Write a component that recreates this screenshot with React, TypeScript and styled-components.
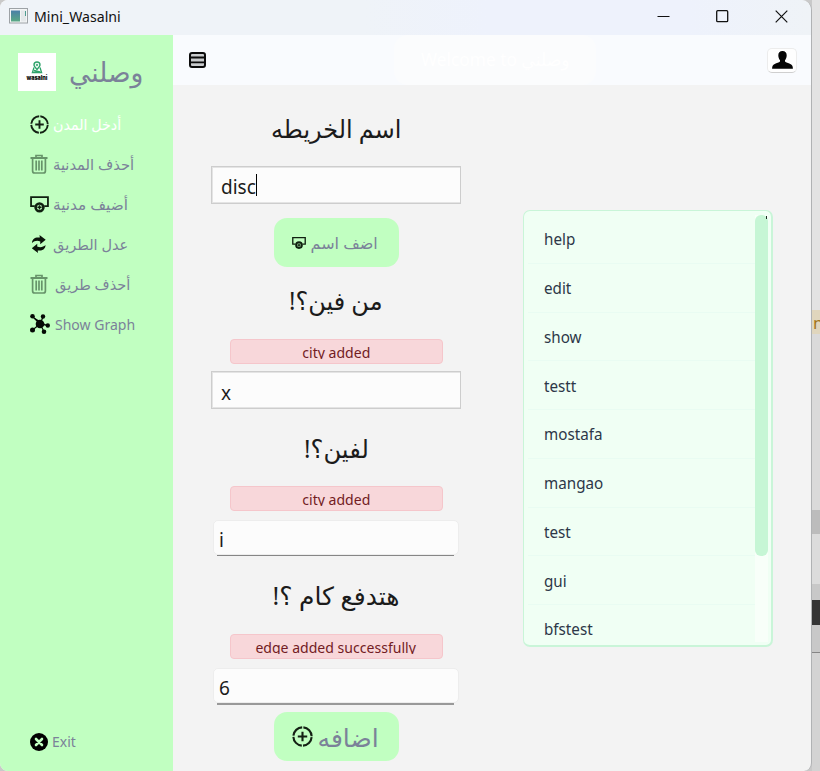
import React from "react";
import styled, { createGlobalStyle } from "styled-components";

const Global = createGlobalStyle`
  * { box-sizing: border-box; }
  body { margin: 0; overflow: hidden; }
  svg { display: block; flex: none; }
`;

const Desktop = styled.div`
  display: flex;
  width: 820px;
  height: 771px;
  background: #c9c9c9;
  font-family: "Noto Sans", "DejaVu Sans", sans-serif;
`;

const Window = styled.div`
  display: flex;
  flex-direction: column;
  width: 812px;
  height: 771px;
  border-right: 1px solid #b0b2b4;
  border-radius: 8px 10px 8px 8px;
  overflow: hidden;
  background: #f3f3f3;
`;

const Behind = styled.div`
  display: flex;
  flex-direction: column;
  width: 8px;
  overflow: hidden;
`;

const Strip = styled.div<{ $h: number; $c: string }>`
  height: ${(p) => p.$h}px;
  flex: none;
  background: ${(p) => p.$c};
  color: #a5761a;
  font-size: 17px;
  line-height: 25px;
  padding-left: 1px;
`;

const TitleBar = styled.header`
  display: flex;
  align-items: center;
  height: 35px;
  flex: none;
  padding: 0 23px 3px 9px;
  background: linear-gradient(90deg, #eff3f8 0%, #eff3f8 45%, #eef2fc 60%, #eef2fc 85%, #eff3f7 100%);
`;

const Caption = styled.div`
  display: flex;
  margin-left: auto;
  gap: 46px;
`;

const Text = styled.span<{ $size: number; $ls?: number; $sx?: number; $dy?: number; $origin?: string }>`
  display: inline-block;
  font-size: ${(p) => p.$size}px;
  line-height: 1.3;
  white-space: nowrap;
  letter-spacing: ${(p) => p.$ls ?? 0}px;
  transform: translateY(${(p) => p.$dy ?? 0}px) scaleX(${(p) => p.$sx ?? 1});
  transform-origin: ${(p) => p.$origin ?? "left"} center;
`;

const Title = styled(Text)`
  margin-left: 6px;
  color: #111;
`;

const Body = styled.div`
  display: flex;
  flex: 1;
`;

const Sidebar = styled.nav`
  display: flex;
  flex-direction: column;
  width: 173px;
  padding: 18px 0 9px 18px;
  background: #c1ffc1;
  color: #7b8299;
`;

const Brand = styled.div`
  display: flex;
  align-items: center;
  gap: 13px;
  height: 38px;
  margin-bottom: 13px;
`;

const NavItem = styled.div<{ $active?: boolean; $last?: boolean; $gap?: number }>`
  display: flex;
  align-items: center;
  height: 40px;
  padding-left: 12px;
  gap: ${(p) => p.$gap ?? 4}px;
  margin-top: ${(p) => (p.$last ? "auto" : 0)};
  color: ${(p) => (p.$active ? "#ffffff" : "inherit")};
`;

const Main = styled.main`
  display: flex;
  flex-direction: column;
  width: 638px;
`;

const TopBar = styled.div`
  display: flex;
  align-items: center;
  justify-content: space-between;
  height: 50px;
  padding: 0 14px 0 16px;
  background: #f9fbfe;
`;

const Welcome = styled.div`
  display: flex;
  align-items: center;
  justify-content: center;
  width: 202px;
  height: 50px;
  margin-left: 17px;
  border-radius: 14px;
  background: #fbfcfd;
  color: #ffffff;
`;

const Profile = styled.div`
  display: flex;
  align-items: center;
  justify-content: center;
  width: 30px;
  height: 25px;
  border: 1px solid #ececec;
  border-bottom-color: #cfcfcf;
  border-radius: 5px;
  background: #fefefe;
`;

const Content = styled.div`
  display: flex;
  padding-left: 38px;
`;

const Form = styled.div`
  display: flex;
  flex-direction: column;
  align-items: center;
  width: 250px;
  height: 686px;
`;

const Label = styled.h2<{ $h: number }>`
  display: flex;
  align-items: center;
  justify-content: center;
  flex: none;
  height: ${(p) => p.$h}px;
  margin: 0;
  font-weight: 400;
  color: #1b1b1b;
`;

const Input = styled.div<{ $raised?: boolean }>`
  display: flex;
  align-items: center;
  flex: none;
  width: 250px;
  height: 38px;
  padding: 4px 0 0 9px;
  border: 1px solid #cdcdcd;
  box-shadow: inset 1px 1px 0 #e4e4e4, inset 0 -1px 0 #e4e4e4;
  background: #fcfcfc;
  color: #1b1b1b;
  ${(p) =>
    p.$raised &&
    `
    width: 246px;
    height: 35px;
    padding: 5px 0 0 5px;
    border: 1px solid #ededed;
    border-radius: 5px;
    box-shadow: none;
  `}
`;

const Underline = styled.div<{ $thick?: boolean }>`
  flex: none;
  width: 237px;
  height: ${(p) => (p.$thick ? 2 : 1)}px;
  margin-right: 1px;
  background: ${(p) => (p.$thick ? "#999999" : "#868686")};
`;

const Caret = styled.i`
  width: 1px;
  height: 22px;
  margin-top: -5px;
  background: #000;
`;

const Button = styled.div`
  display: flex;
  align-items: center;
  flex: none;
  gap: 5px;
  width: 125px;
  height: 49px;
  padding: 0 0 0 18px;
  border-radius: 13px;
  background: #c1ffc1;
  color: #7b8299;
`;

const NoticeBox = styled.div`
  display: flex;
  justify-content: center;
  flex: none;
  width: 213px;
  height: 25px;
  padding-top: 1px;
  border: 1px solid #f5c6cb;
  border-radius: 4px;
  background: #f8d7da;
  color: #721c24;
`;

const NoticeClip = styled.div`
  height: 18px;
  overflow: hidden;
`;

const NoticeText = styled(Text)`
  display: block;
  line-height: 22px;
`;

const Notice = ({ children }: { children: string }) => (
  <NoticeBox>
    <NoticeClip>
      <NoticeText $size={15} $sx={0.937} $origin="center">{children}</NoticeText>
    </NoticeClip>
  </NoticeBox>
);

const Gap = styled.div<{ $h: number }>`
  flex: none;
  height: ${(p) => p.$h}px;
`;

const Panel = styled.div`
  display: flex;
  width: 250px;
  height: 437px;
  margin: 125px 0 0 62px;
  padding: 4px 3px 3px 4px;
  border: 1px solid #c9f5d8;
  border-right-width: 2px;
  border-bottom-width: 2px;
  border-radius: 7px;
  background: #f0fff4;
`;

const Rows = styled.div`
  width: 227px;
  height: 429px;
  overflow: hidden;
`;

const Row = styled.div`
  display: flex;
  align-items: center;
  height: 48.75px;
  padding: 2px 0 0 16px;
  border-bottom: 1px solid #e9fcf2;
  color: #2d3748;
`;

const Track = styled.div`
  position: relative;
  width: 13px;
  background: #f8fff9;
`;

const Thumb = styled.div`
  height: 341px;
  border-radius: 6px;
  background: #c6f6d5;
`;

const Speck = styled.i`
  position: absolute;
  top: 1px;
  right: 1px;
  width: 1px;
  height: 3px;
  background: #1c2a20;
`;

const PlusCircle = ({ size }: { size: number }) => (
  <svg width={size} height={size} viewBox="0 0 20 20" fill="none" stroke="#142114">
    <circle cx="10" cy="10" r="8.7" strokeWidth="2" strokeDasharray="12.47 1.2" strokeDashoffset="-.6" />
    <path d="M10 5.500v9M5.500 10h9" strokeWidth="2" />
  </svg>
);

const Trash = () => (
  <svg width="18" height="20" viewBox="0 0 18 20" fill="none" stroke="#67946a">
    <path d="M.5 4h17" strokeWidth="2" />
    <path d="M6 3V1.500h6V3M2.600 4v13q0 2 2 2h8.800q2 0 2-2V4" strokeWidth="1.700" />
    <path d="M6.200 6.500v10M9 6.500v10M11.800 6.500v10" strokeWidth="1.700" />
  </svg>
);

const BoxPlus = ({ size }: { size: number }) => (
  <svg width={size} height={size} viewBox="0 0 18 18" fill="none" stroke="#102010">
    <path d="M4.500 10.500H1V2h16v8.500h-3.500" strokeWidth="1.700" />
    <circle cx="9" cy="11.700" r="3.700" strokeWidth="2.500" />
    <path d="M9 9.700v4M7 11.700h4" strokeWidth="1.400" />
  </svg>
);

const Refresh = () => (
  <svg width="18" height="18" viewBox="0 0 18 18" fill="#0a140a">
    <path d="M2 8C2 3.800 5.500 1.800 9.800 2.600L9.500 0l6.200 4.700-5.500 4.600.1-2.900C7 5.300 4.300 5.900 2 8Z" />
    <path d="M15.500 10c0 4.200-3.500 6.200-7.800 5.400l.3 2.600-6.200-4.700 5.500-4.600-.1 2.900c3.300 1.100 6 .5 8.300-1.600Z" />
  </svg>
);

const Graph = () => (
  <svg width="20" height="20" viewBox="0 0 20 20" fill="#050a05" stroke="#050a05">
    <path d="M2.500 2.500 10 10l7.500 1.500M10 10l3-7M10 10l-7.500 6M10 10l4 7.500" strokeWidth="1.200" />
    <g stroke="none">
      <circle cx="10" cy="10" r="4.300" />
      <circle cx="2.500" cy="2.300" r="2.300" />
      <circle cx="13" cy="2.500" r="2.200" />
      <circle cx="17.800" cy="11.500" r="2.200" />
      <circle cx="2.500" cy="16" r="2.500" />
      <circle cx="14" cy="17.700" r="2.300" />
    </g>
  </svg>
);

const ExitIcon = () => (
  <svg width="18" height="18" viewBox="0 0 18 18">
    <circle cx="9" cy="9" r="9" fill="#000" />
    <path d="m6 6 6 6M12 6l-6 6" stroke="#c1ffc1" strokeWidth="2.600" strokeLinecap="round" />
  </svg>
);

const Logo = () => (
  <svg width="38" height="38" viewBox="0 0 38 38">
    <rect width="38" height="38" fill="#fff" />
    <g fill="none" stroke="#2fa36b">
      <path d="M19 16.500c-2.200-2.400-3-3.300-3-4.500a3 3 0 0 1 6 0c0 1.200-.8 2.100-3 4.500Z" strokeWidth="1.400" />
      <circle cx="19" cy="12" r=".8" />
      <path d="m16 14.500-1.600 5h9.200l-1.600-5M16 17.500l6 1.500" strokeWidth="1.300" />
    </g>
    <text x="19" y="26.800" textAnchor="middle" fontFamily="Inter" fontWeight="900" fontSize="5.500" textLength="21" fill="#111">wasalni</text>
  </svg>
);

const AppIcon = () => (
  <svg width="19" height="16" viewBox="0 0 19 16">
    <defs>
      <linearGradient id="screen" x2="0" y2="1">
        <stop stopColor="#4a7fa8" />
        <stop offset="1" stopColor="#5aa984" />
      </linearGradient>
    </defs>
    <rect x=".5" y=".5" width="18" height="14.500" fill="#f3f5f6" stroke="#9da2a6" />
    <rect x="2" y="2.500" width="9" height="11" fill="url(#screen)" />
    <rect x="12" y="2.500" width="5" height="11" fill="#e4e8ea" />
    <path d="M16.500 3v5" stroke="#4e9d91" />
  </svg>
);

const Menu = () => (
  <svg width="17" height="16" viewBox="0 0 17 16">
    <rect x="1" y="1" width="15" height="14" rx="2" fill="#c9cbcd" stroke="#0b0b0b" strokeWidth="2" />
    <path d="M1 5.500h15M1 10.300h15" stroke="#0b0b0b" strokeWidth="1.800" />
  </svg>
);

const Person = () => (
  <svg width="21" height="18" viewBox="0 0 21 18" fill="#050505">
    <path d="M10.500 0c2.800 0 4.200 1.700 4.200 4.300 0 2.400-1 4-1.700 5v1.200c1 1 3.200 1.500 5.300 2.500 1.900.9 2.600 2 2.600 4.700H.1c0-2.700.7-3.800 2.600-4.700 2.100-1 4.300-1.500 5.300-2.500V9.300c-.7-1-1.700-2.600-1.700-5C6.300 1.700 7.700 0 10.500 0Z" />
  </svg>
);

const names = ["help", "edit", "show", "testt", "mostafa", "mangao", "test", "gui", "bfstest"];

export default function App() {
  return (
    <Desktop>
      <Global />
      <Window>
        <TitleBar>
          <AppIcon />
          <Title $size={14} $sx={1.01} $dy={1}>Mini_Wasalni</Title>
          <Caption>
            <svg width="13" height="13" viewBox="0 0 13 13"><path d="M.5 6.500h12" stroke="#111" /></svg>
            <svg width="13" height="13" viewBox="0 0 13 13"><rect x=".7" y=".7" width="11" height="11" rx="1" fill="none" stroke="#111" strokeWidth="1.300" /></svg>
            <svg width="13" height="13" viewBox="0 0 13 13"><path d="m.7.700 11.600 11.600M12.300.700.700 12.300" stroke="#111" strokeWidth="1.200" /></svg>
          </Caption>
        </TitleBar>
        <Body>
          <Sidebar>
            <Brand>
              <Logo />
              <Text $size={27} $sx={0.985}>وصلني</Text>
            </Brand>
            <NavItem $active><PlusCircle size={19} /><Text $size={15} $sx={0.95} $dy={1}>أدخل المدن</Text></NavItem>
            <NavItem $gap={5}><Trash /><Text $size={15} $sx={0.98} $dy={1}>أحذف المدنية</Text></NavItem>
            <NavItem><BoxPlus size={19} /><Text $size={15} $sx={1.02} $dy={1}>أضيف مدنية</Text></NavItem>
            <NavItem $gap={5}><Refresh /><Text $size={15} $sx={0.97} $dy={1}>عدل الطريق</Text></NavItem>
            <NavItem $gap={7}><Trash /><Text $size={15} $sx={0.97} $dy={1}>أحذف طريق</Text></NavItem>
            <NavItem $gap={5}><Graph /><Text $size={15} $sx={0.935} $dy={1}>Show Graph</Text></NavItem>
            <NavItem $last><ExitIcon /><Text $size={15} $sx={0.93}>Exit</Text></NavItem>
          </Sidebar>
          <Main>
            <TopBar>
              <Menu />
              <Welcome><Text $size={18} $sx={0.96} $origin="center">Welcome to وصلني</Text></Welcome>
              <Profile><Person /></Profile>
            </TopBar>
            <Content>
              <Form>
                <Label $h={81}><Text $size={25} $sx={0.955} $dy={3} $origin="center" dir="rtl">اسم الخريطه</Text></Label>
                <Input><Text $size={19}>disc</Text><Caret /></Input>
                <Gap $h={14} />
                <Button><BoxPlus size={14} /><Text $size={16} $dy={1}>اضف اسم</Text></Button>
                <Label $h={72}><Text $size={25} $sx={0.96} $dy={-3} $origin="center" dir="rtl">من فين؟!</Text></Label>
                <Notice>city added</Notice>
                <Gap $h={7} />
                <Input><Text $size={19} $dy={1}>x</Text></Input>
                <Label $h={77}><Text $size={25} $sx={0.97} $dy={1} $origin="center" dir="rtl">لفين؟!</Text></Label>
                <Notice>city added</Notice>
                <Gap $h={9} />
                <Input $raised><Text $size={19}>i</Text></Input>
                <Underline />
                <Label $h={78}><Text $size={25} $origin="center" dir="rtl">هتدفع كام ؟!</Text></Label>
                <Notice>edge added successfully</Notice>
                <Gap $h={9} />
                <Input $raised><Text $size={19}>6</Text></Input>
                <Underline $thick />
                <Gap $h={7} />
                <Button><PlusCircle size={21} /><Text $size={25} $dy={1}>اضافه</Text></Button>
              </Form>
              <Panel>
                <Rows>
                  {names.map((n) => (
                    <Row key={n}><Text $size={16} $sx={0.95}>{n}</Text></Row>
                  ))}
                </Rows>
                <Track><Thumb /><Speck /></Track>
              </Panel>
            </Content>
          </Main>
        </Body>
      </Window>
      <Behind>
        <Strip $h={310} $c="#e3e3e3" />
        <Strip $h={24} $c="#e0d6bd">n</Strip>
        <Strip $h={176} $c="#dadada" />
        <Strip $h={24} $c="#bcbcbc" />
        <Strip $h={50} $c="#dcdcdc" />
        <Strip $h={16} $c="#c8c8c8" />
        <Strip $h={25} $c="#353535" />
        <Strip $h={27} $c="#c8c8c8" />
        <Strip $h={1} $c="#858585" />
        <Strip $h={118} $c="#d3d3d3" />
      </Behind>
    </Desktop>
  );
}
